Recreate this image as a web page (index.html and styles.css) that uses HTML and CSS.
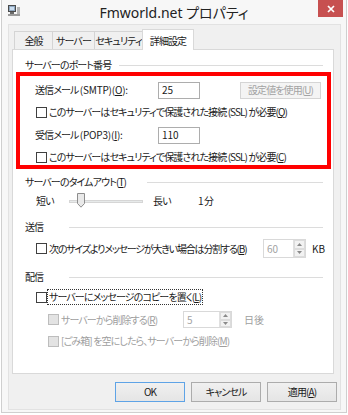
FILE: index.html
```html
<!DOCTYPE html>
<html lang="ja">
<head>
<meta charset="utf-8">
<title>Fmworld.net プロパティ</title>
<link rel="stylesheet" href="styles.css">
</head>
<body>
<div class="window">
  <div class="titlebar">
    <div class="tb-left">
      <svg class="app-icon" width="13" height="13" viewBox="0 0 13 13">
        <rect x="0.5" y="0.5" width="7" height="6" fill="#8fa7c0" stroke="#4a4a4a"/>
        <rect x="2" y="2" width="4" height="3" fill="#c9dcef"/>
        <rect x="2" y="7" width="4" height="2" fill="#6a6a6a"/>
        <rect x="0" y="9" width="12" height="2" fill="#9a9a9a"/>
        <rect x="9" y="2" width="3" height="7" fill="#b5b5b5"/>
      </svg>
    </div>
    <div class="title">Fmworld.net プロパティ</div>
    <div class="tb-right">
      <div class="close">
        <svg width="8" height="8" viewBox="0 0 8 8"><path d="M1 1 L7 7 M7 1 L1 7" stroke="#fff" stroke-width="1.7"/></svg>
      </div>
    </div>
  </div>
  <div class="client">
    <div class="tabs">
      <div class="tab t1">全般</div>
      <div class="tab t2">サーバー</div>
      <div class="tab t3">セキュリティ</div>
      <div class="tab t4 active">詳細設定</div>
    </div>
    <div class="panel">
      <div class="sec-head h-port"><span class="sec-label">サーバーのポート番号</span><span class="sec-line"></span></div>
      <div class="highlight">
        <div class="row r-field r-first">
          <span class="lbl">送信メール <span class="lat">(SMTP)(<u>O</u>):</span></span>
          <span class="input">25</span>
          <span class="btn-disabled">設定値を使用(<u>U</u>)</span>
        </div>
        <div class="row r-check r-gap4">
          <span class="cb"></span><span class="cb-text">このサーバーはセキュリティで保護された接続 (SSL) が必要(<u>Q</u>)</span>
        </div>
        <div class="row r-field r-gap5">
          <span class="lbl">受信メール <span class="lat">(POP3)(<u>I</u>):</span></span>
          <span class="input">110</span>
        </div>
        <div class="row r-check r-gap5 r-last">
          <span class="cb"></span><span class="cb-text">このサーバーはセキュリティで保護された接続 (SSL) が必要(<u>C</u>)</span>
        </div>
      </div>

      <div class="sec-head h-timeout"><span class="sec-label">サーバーのタイムアウト(<u>T</u>)</span><span class="sec-line"></span></div>
      <div class="row r-slider">
        <span class="s-short">短い</span>
        <span class="track">
          <svg class="thumb" width="8" height="15" viewBox="0 0 8 15">
            <path d="M0.5 0.5 H7.5 V10.5 L4 14.2 L0.5 10.5 Z" fill="#e9e9e9" stroke="#8d8d8d"/>
          </svg>
        </span>
        <span class="s-long">長い</span>
        <span class="s-val">1 分</span>
      </div>

      <div class="sec-head h-send"><span class="sec-label">送信</span><span class="sec-line"></span></div>
      <div class="row r-split">
        <span class="split-label"><span class="cb"></span><span class="cb-text tight">次のサイズよりメッセージが大きい場合は分割する(<u>B</u>)</span></span>
        <span class="spin spin-kb">
          <span class="spin-val">60</span>
          <span class="spin-btns">
            <span class="spin-b"><svg width="5" height="3" viewBox="0 0 5 3"><path d="M0 3 L2.5 0 L5 3 Z" fill="#8a8a8a"/></svg></span>
            <span class="spin-b"><svg width="5" height="3" viewBox="0 0 5 3"><path d="M0 0 L2.5 3 L5 0 Z" fill="#8a8a8a"/></svg></span>
          </span>
        </span>
        <span class="unit">KB</span>
      </div>

      <div class="sec-head h-deliver"><span class="sec-label">配信</span><span class="sec-line"></span></div>
      <div class="row r-deliver">
        <span class="cb"></span><span class="cb-text focus">サーバーにメッセージのコピーを置く(<u>L</u>)</span>
      </div>
      <div class="row r-sub1">
        <span class="sub-label"><span class="cb cb-dis"></span><span class="cb-text dis">サーバーから削除する(<u>R</u>)</span></span>
        <span class="spin spin-days">
          <span class="spin-val">5</span>
          <span class="spin-btns">
            <span class="spin-b"><svg width="5" height="3" viewBox="0 0 5 3"><path d="M0 3 L2.5 0 L5 3 Z" fill="#8a8a8a"/></svg></span>
            <span class="spin-b"><svg width="5" height="3" viewBox="0 0 5 3"><path d="M0 0 L2.5 3 L5 0 Z" fill="#8a8a8a"/></svg></span>
          </span>
        </span>
        <span class="unit dis">日後</span>
      </div>
      <div class="row r-sub2">
        <span class="cb cb-dis"></span><span class="cb-text dis">[ごみ箱] を空にしたら、サーバーから削除(<u>M</u>)</span>
      </div>
    </div>
    <div class="buttons">
      <div class="btn default">OK</div>
      <div class="btn">キャンセル</div>
      <div class="btn">適用(<u>A</u>)</div>
    </div>
  </div>
</div>
</body>
</html>
```

FILE: styles.css
```css
* { box-sizing: border-box; }
html, body { margin: 0; padding: 0; background: #ffffff; }
body {
  font-family: "Noto Sans CJK JP", "Noto Sans", sans-serif;
  font-size: 10px;
  line-height: 12px;
  letter-spacing: -0.9px;
  color: #1a1a1a;
  font-feature-settings: "palt";
}
u { text-decoration: underline; text-underline-offset: 1px; }
.lat { letter-spacing: -0.2px; }
.tight { letter-spacing: -1.2px; }

.window {
  margin: 0 1px;
  width: 346px;
  height: 413px;
  background: #f7f7f7;
  border: 1px solid #cfcfcf;
  border-top: none;
  display: flex;
  flex-direction: column;
}

.titlebar {
  height: 24px;
  flex: none;
  display: grid;
  grid-template-columns: 1fr auto 1fr;
  align-items: start;
}
.tb-left { padding: 5px 0 0 6px; }
.app-icon { display: block; }
.title {
  font-family: "Noto Sans", "Noto Sans CJK JP", sans-serif;
  font-size: 14px;
  line-height: 16px;
  letter-spacing: 0;
  padding-top: 5px;
  color: #222;
  white-space: nowrap;
}
.tb-right { display: flex; justify-content: flex-end; padding-right: 3px; }
.close {
  width: 25px;
  height: 17px;
  background: #c75050;
  display: flex;
  align-items: center;
  justify-content: center;
}
.close svg { display: block; }

.client {
  flex: 1;
  margin: 0 5px 2px 6px;
  background: #f0f0f0;
  border: 1px solid #e2e2e2;
  padding: 4px 3px 0 3px;
}

.tabs {
  display: flex;
  align-items: flex-end;
  height: 21px;
  margin-bottom: -1px;
  padding-left: 2px;
  position: relative;
  z-index: 1;
}
.tab {
  height: 18px;
  margin-bottom: 1px;
  margin-left: -1px;
  border: 1px solid #d4d4d4;
  border-bottom: none;
  background: #f0f0f0;
  display: flex;
  align-items: center;
  justify-content: center;
  white-space: nowrap;
  padding-top: 1px;
}
.tab:first-child { margin-left: 0; }
.t1 { width: 39px; }
.t2 { width: 43px; }
.t3 { width: 49px; }
.t4 { width: 52px; }
.tab.active {
  height: 21px;
  margin-bottom: 0;
  background: #ffffff;
  border-color: #d9d9d9;
}

.panel {
  width: 322px;
  height: 325px;
  background: #ffffff;
  border: 1px solid #d9d9d9;
  padding: 0 2px 0 3px;
}

.sec-head {
  display: flex;
  align-items: center;
  height: 14px;
  padding: 0 8px 0 9px;
  white-space: nowrap;
}
.sec-line { flex: 1; height: 1px; background: #dcdcdc; }
.h-port { margin-top: 8px; }
.h-port .sec-label { width: 94px; }
.h-timeout { margin-top: 6px; }
.h-timeout .sec-label { width: 122px; }
.h-send { margin-top: 11px; }
.h-send .sec-label { width: 44px; }
.h-deliver { margin-top: 12px; }
.h-deliver .sec-label { width: 44px; }

.highlight {
  border: 4px solid #ff0000;
  padding-top: 5px;
  height: 97px;
}

.row { display: flex; align-items: center; white-space: nowrap; }
.r-field { height: 18px; padding-left: 15px; }
.r-check { height: 18px; padding-left: 16px; }
.r-gap4 { margin-top: 4px; }
.r-gap5 { margin-top: 5px; }
.r-last { height: 16px; }
.lbl { width: 123px; }
.input {
  width: 42px;
  height: 17px;
  border: 1px solid #adadad;
  background: #fff;
  padding-left: 3px;
  display: flex;
  align-items: center;
  letter-spacing: 0;
}
.btn-disabled {
  margin-left: 40px;
  width: 81px;
  height: 17px;
  background: #f4f4f4;
  border: 1px solid #d5d5d5;
  color: #a3a3a3;
  display: flex;
  align-items: center;
  justify-content: center;
}

.cb {
  width: 11px;
  height: 11px;
  border: 1px solid #404040;
  background: #fff;
  flex: none;
}
.cb-dis { border-color: #bdbdbd; background: #e3e3e3; }
.cb-text { margin-left: 2px; }
.dis { color: #9e9e9e; }
.focus { outline: 1px dotted #333; outline-offset: 0; padding: 0 1px; margin-left: 1px; line-height: 14px; }

.r-slider { height: 16px; margin-top: 4px; padding-left: 20px; }
.s-short { width: 33px; }
.track {
  position: relative;
  width: 74px;
  height: 3px;
  background: #e7eaea;
  border: 1px solid #d6d6d6;
}
.thumb { position: absolute; left: 7px; top: -8px; display: block; }
.s-long { margin-left: 10px; width: 45px; }

.r-split { height: 19px; margin-top: 5px; padding-left: 20px; }
.split-label { display: flex; align-items: center; width: 227px; }
.spin {
  display: flex;
  height: 19px;
  border: 1px solid #d9d9d9;
  background: #fff;
  letter-spacing: 0;
}
.spin-val { flex: 1; color: #a3a3a3; padding-left: 3px; display: flex; align-items: center; }
.spin-btns { width: 12px; display: flex; flex-direction: column; border-left: 1px solid #e0e0e0; }
.spin-b {
  flex: 1;
  background: #f2f2f2;
  border: 1px solid #dcdcdc;
  display: flex;
  align-items: center;
  justify-content: center;
}
.spin-b svg { display: block; }
.spin-kb { width: 43px; }
.unit { margin-left: 6px; letter-spacing: 0; }

.r-deliver { height: 16px; margin-top: 5px; padding-left: 20px; }
.r-sub1 { height: 17px; margin-top: 6px; padding-left: 32px; }
.sub-label { display: flex; align-items: center; width: 135px; }
.spin-days { width: 49px; height: 17px; }
.spin-days + .unit { margin-left: 12px; }
.r-sub2 { height: 16px; margin-top: 5px; padding-left: 32px; }

.buttons {
  display: flex;
  justify-content: flex-end;
  gap: 6px;
  margin-top: 8px;
}
.btn {
  width: 70px;
  height: 20px;
  border: 1px solid #acacac;
  background: linear-gradient(#f0f0f0, #e5e5e5);
  display: flex;
  align-items: center;
  justify-content: center;
  white-space: nowrap;
}
.btn.default { border-color: #5ea3e6; }
```
